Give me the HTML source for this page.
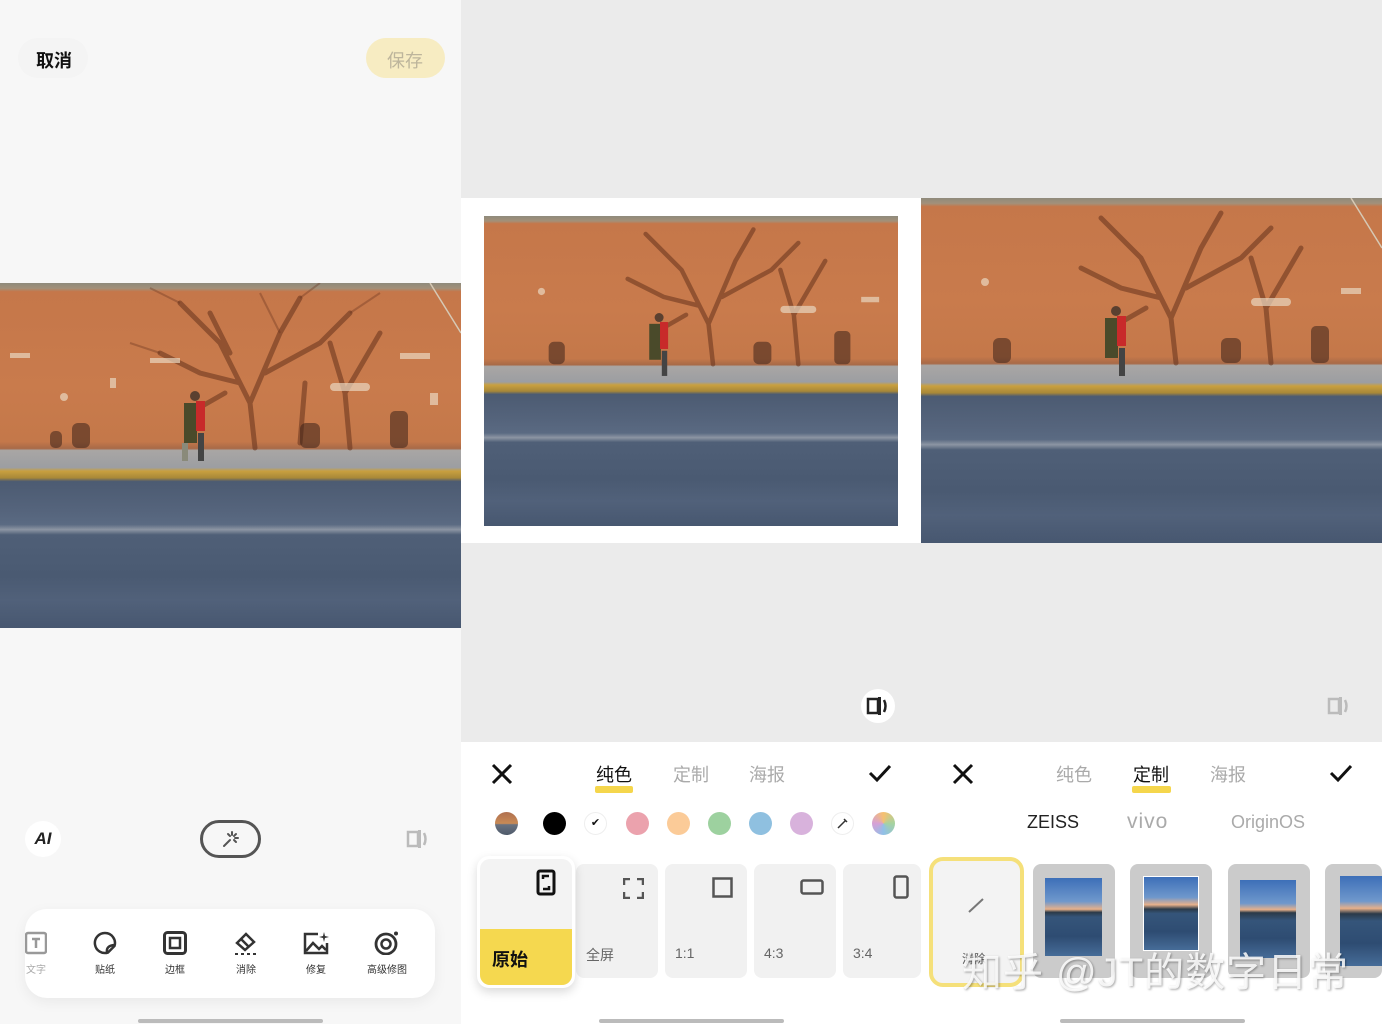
<!DOCTYPE html>
<html><head><meta charset="utf-8">
<style>
*{margin:0;padding:0;box-sizing:border-box}
body{width:1382px;height:1024px;overflow:hidden;position:relative;font-family:"Liberation Sans","Noto Sans CJK SC",sans-serif;background:#f7f7f7}
.abs{position:absolute}
.photo{position:absolute;overflow:hidden;background:linear-gradient(180deg,#8f8a7c 0%,#a39079 1.6%,#c5774a 2.5%,#c97b4c 30%,#c4784a 46%,#a86a48 48%,#a9a6a4 48.5%,#9c9ea2 53.5%,#c9a040 54.5%,#a88838 56.5%,#4c5b72 57.5%,#55647c 66%,#5a6a82 70%,#8c95a3 71.5%,#4f5f77 73%,#4a5a72 85%,#51617a 92%,#475770 100%)}
.photo svg{position:absolute;left:0;top:0;width:100%;height:100%}
.tab{position:absolute;font-size:18px;color:#aaa}
.dot{position:absolute;width:23px;height:23px;border-radius:50%;top:812px}
.card{position:absolute;top:864px;width:82px;height:114px;background:#f1f1f1;border-radius:8px}
.card span{position:absolute;left:10px;top:81px;font-size:14px;color:#666}
.tool{position:absolute;top:931px;width:60px;text-align:center;font-size:10px;color:#333}
.tool svg{display:block;margin:0 auto 6px}
.thumb{position:absolute;top:864px;width:82px;height:114px;background:#cbcbcb;border-radius:8px;overflow:hidden}
</style></head><body>

<!-- LEFT PANEL -->
<div class="abs" style="left:0;top:0;width:461px;height:1024px;background:#f7f7f7"></div>
<div class="abs" style="left:18px;top:38px;width:70px;height:40px;border-radius:20px;background:#f4f4f4"></div>
<div class="abs" style="left:36px;top:47px;font-size:18px;font-weight:bold;color:#111">取消</div>
<div class="abs" style="left:366px;top:38px;width:79px;height:40px;border-radius:20px;background:#f7ecc2"></div>
<div class="abs" style="left:387px;top:47px;font-size:18px;color:#bdb59c">保存</div>

<div class="photo" style="left:0;top:283px;width:461px;height:345px">
<svg viewBox="0 0 461 345" preserveAspectRatio="none">
<g stroke="rgba(100,50,28,.55)" fill="none" stroke-width="5" stroke-linecap="round">
<path d="M255 165 L250 120 L220 60 L180 20 M250 120 L280 50 L300 15 M240 100 L200 90 L160 70 M265 90 L320 60 L350 30 M230 70 L210 30 M225 110 L190 130"/>
<path d="M350 165 L345 110 L330 60 M345 110 L380 50 M300 160 L305 100"/>
</g>
<g stroke="rgba(100,50,28,.35)" fill="none" stroke-width="2"><path d="M180 20 L150 5 M300 15 L320 0 M350 30 L380 10 M160 70 L130 60 M280 50 L260 10"/></g>
<g fill="rgba(60,35,25,.55)"><rect x="72" y="140" width="18" height="25" rx="6"/><rect x="300" y="140" width="20" height="25" rx="6"/><rect x="390" y="128" width="18" height="37" rx="5"/><rect x="50" y="148" width="12" height="17" rx="5"/></g>
<g fill="#e9d7c0" opacity=".7"><rect x="330" y="100" width="40" height="8" rx="4"/><rect x="10" y="70" width="20" height="5"/><rect x="150" y="75" width="30" height="5"/><rect x="400" y="70" width="30" height="6"/><rect x="60" y="110" width="8" height="8" rx="4"/><rect x="110" y="95" width="6" height="10"/><rect x="430" y="110" width="8" height="12"/></g>
<rect x="184" y="120" width="13" height="40" fill="#4a4a2a"/><rect x="196" y="118" width="9" height="30" fill="#c82a2a"/><circle cx="195" cy="113" r="5" fill="#5a4030"/><rect x="182" y="160" width="6" height="18" fill="#8a8a7a"/><rect x="198" y="150" width="6" height="28" fill="#444"/>
<path d="M430 0 L461 50" stroke="#d6c9b5" stroke-width="1.5"/>
</svg>
</div>

<div class="abs" style="left:25px;top:821px;width:36px;height:36px;border-radius:50%;background:#fff;text-align:center;line-height:36px;font-weight:900;font-style:italic;font-size:17px;color:#222">AI</div>
<div class="abs" style="left:200px;top:820px;width:61px;height:38px;border:3px solid #555;border-radius:20px"></div>
<svg class="abs" style="left:220px;top:829px" width="21" height="21" viewBox="0 0 21 21"><g stroke="#555" stroke-width="2" stroke-linecap="round"><path d="M4 17 L10 11"/><path d="M12 3v3M16 5l-2 2M18 9h-3M8 5l2 2M16 13l-2-2"/></g></svg>
<svg class="abs" style="left:406px;top:828px" width="24" height="22" viewBox="0 0 24 22"><rect x="2" y="4" width="10" height="14" fill="none" stroke="#bbb" stroke-width="2.5"/><rect x="12" y="2" width="3" height="18" fill="#bbb"/><path d="M18 5 Q21 11 18 17" fill="none" stroke="#bbb" stroke-width="2.5"/></svg>

<div class="abs" style="left:25px;top:909px;width:410px;height:89px;border-radius:22px;background:#fff;box-shadow:0 4px 14px rgba(0,0,0,.06)"></div>
<div class="tool" style="left:6px;color:#aaa"><svg width="22" height="24" viewBox="0 0 22 24"><rect x="1" y="2" width="20" height="20" rx="2" fill="none" stroke="#999" stroke-width="2.5"/><path d="M7 8h8M11 8v9" stroke="#999" stroke-width="2.5"/></svg>文字</div>
<div class="tool" style="left:75px"><svg width="24" height="24" viewBox="0 0 24 24"><path d="M12 2a10 10 0 1 0 3 19.5 L21.5 15 A10 10 0 0 0 12 2z" fill="none" stroke="#333" stroke-width="2.5"/><path d="M14 21 Q13 15 21 14" fill="none" stroke="#333" stroke-width="2.5"/></svg>贴纸</div>
<div class="tool" style="left:145px"><svg width="24" height="24" viewBox="0 0 24 24"><rect x="1.5" y="1.5" width="21" height="21" rx="3" fill="none" stroke="#333" stroke-width="3"/><rect x="7" y="7" width="10" height="10" fill="none" stroke="#333" stroke-width="2.5"/></svg>边框</div>
<div class="tool" style="left:216px"><svg width="26" height="24" viewBox="0 0 26 24"><path d="M4 12 L13 3 L21 11 L12 19z" fill="none" stroke="#333" stroke-width="2.5"/><path d="M8 8 L16 16" stroke="#333" stroke-width="2.5"/><path d="M2 23h3M8 23h3M14 23h3M20 23h3" stroke="#333" stroke-width="2"/></svg>消除</div>
<div class="tool" style="left:286px"><svg width="26" height="24" viewBox="0 0 26 24"><path d="M15 3H2v19h22V12" fill="none" stroke="#333" stroke-width="2.5"/><path d="M3 20 L10 12 L16 18 L19 15 L23 19" fill="none" stroke="#333" stroke-width="2.5"/><path d="M21 1 L22 5 L26 6 L22 7 L21 11 L20 7 L16 6 L20 5z" fill="#333"/></svg>修复</div>
<div class="tool" style="left:357px;width:60px"><svg width="26" height="24" viewBox="0 0 26 24"><circle cx="12" cy="13" r="10" fill="none" stroke="#333" stroke-width="2.8"/><circle cx="12" cy="13" r="4.5" fill="none" stroke="#333" stroke-width="2.5"/><circle cx="22" cy="2.5" r="2" fill="#333"/></svg>高级修图</div>
<div class="abs" style="left:138px;top:1019px;width:185px;height:4px;border-radius:2px;background:#bbb"></div>

<!-- MIDDLE PANEL -->
<div class="abs" style="left:461px;top:0;width:460px;height:742px;background:#ebebeb"></div>
<div class="abs" style="left:461px;top:198px;width:460px;height:345px;background:#fff"></div>
<div class="photo" style="left:484px;top:216px;width:414px;height:310px">
<svg viewBox="0 0 461 345" preserveAspectRatio="none">
<g stroke="rgba(100,50,28,.55)" fill="none" stroke-width="5" stroke-linecap="round"><path d="M255 165 L250 120 L220 60 L180 20 M250 120 L280 50 L300 15 M240 100 L200 90 L160 70 M265 90 L320 60 L350 30 M225 110 L190 130"/><path d="M350 165 L345 110 L330 60 M345 110 L380 50"/></g>
<g fill="rgba(60,35,25,.55)"><rect x="72" y="140" width="18" height="25" rx="6"/><rect x="300" y="140" width="20" height="25" rx="6"/><rect x="390" y="128" width="18" height="37" rx="5"/></g>
<g fill="#e9d7c0" opacity=".7"><rect x="330" y="100" width="40" height="8" rx="4"/><rect x="60" y="80" width="8" height="8" rx="4"/><rect x="420" y="90" width="20" height="6"/></g>
<rect x="184" y="120" width="13" height="40" fill="#4a4a2a"/><rect x="196" y="118" width="9" height="30" fill="#c82a2a"/><circle cx="195" cy="113" r="5" fill="#5a4030"/><rect x="198" y="150" width="6" height="28" fill="#444"/>
</svg></div>
<div class="abs" style="left:861px;top:689px;width:34px;height:34px;border-radius:50%;background:#fff"></div>
<svg class="abs" style="left:866px;top:695px" width="24" height="22" viewBox="0 0 24 22"><rect x="2" y="4" width="10" height="14" fill="none" stroke="#222" stroke-width="2.5"/><rect x="12" y="2" width="3" height="18" fill="#222"/><path d="M18 5 Q21 11 18 17" fill="none" stroke="#222" stroke-width="2.5"/></svg>

<div class="abs" style="left:461px;top:742px;width:460px;height:282px;background:#fff"></div>
<svg class="abs" style="left:491px;top:763px" width="22" height="22" viewBox="0 0 22 22"><path d="M2 2L20 20M20 2L2 20" stroke="#111" stroke-width="3"/></svg>
<div class="abs" style="left:595px;top:786px;width:38px;height:7px;background:#f5d64c;border-radius:2px"></div>
<div class="tab" style="left:596px;top:761px;color:#111">纯色</div>
<div class="tab" style="left:673px;top:761px">定制</div>
<div class="tab" style="left:749px;top:761px">海报</div>
<svg class="abs" style="left:868px;top:763px" width="24" height="20" viewBox="0 0 24 20"><path d="M2 10 L9 17 L22 3" fill="none" stroke="#111" stroke-width="3"/></svg>

<div class="dot" style="left:495px;background:linear-gradient(180deg,#b07050 0%,#c88a55 50%,#6a7280 55%,#4e5a6a 100%)"></div>
<div class="dot" style="left:543px;background:#000"></div>
<div class="dot" style="left:584px;background:#fff;border:1px solid #eee;text-align:center;line-height:21px;font-size:11px;color:#111">✔</div>
<div class="dot" style="left:626px;background:#eba2ad"></div>
<div class="dot" style="left:667px;background:#fbcb98"></div>
<div class="dot" style="left:708px;background:#9dd19f"></div>
<div class="dot" style="left:749px;background:#8fc0e0"></div>
<div class="dot" style="left:790px;background:#d8b2dc"></div>
<div class="dot" style="left:831px;background:#fff;border:1px solid #eee"></div>
<svg class="abs" style="left:837px;top:818px" width="11" height="11" viewBox="0 0 11 11"><path d="M1 10 L8 3 M7 1 L10 4" stroke="#333" stroke-width="1.5"/></svg>
<div class="dot" style="left:872px;background:conic-gradient(#f6c070,#a5d3a0,#90c0e8,#d6a0d6,#f6c070)"></div>

<div class="card" style="left:576px"><span>全屏</span><svg class="abs" style="left:47px;top:14px" width="21" height="21" viewBox="0 0 21 21"><path d="M1 7V1h6M14 1h6v6M20 14v6h-6M7 20H1v-6" fill="none" stroke="#555" stroke-width="2.5"/></svg></div>
<div class="card" style="left:665px"><span>1:1</span><svg class="abs" style="left:47px;top:13px" width="21" height="21" viewBox="0 0 21 21"><rect x="1.5" y="1.5" width="18" height="18" fill="none" stroke="#555" stroke-width="2.5"/></svg></div>
<div class="card" style="left:754px"><span>4:3</span><svg class="abs" style="left:46px;top:15px" width="24" height="17" viewBox="0 0 24 17"><rect x="1.5" y="1.5" width="21" height="13" rx="2" fill="none" stroke="#555" stroke-width="2.5"/></svg></div>
<div class="card" style="left:843px;width:78px"><span>3:4</span><svg class="abs" style="left:50px;top:11px" width="17" height="24" viewBox="0 0 17 24"><rect x="1.5" y="1.5" width="13" height="21" rx="2" fill="none" stroke="#555" stroke-width="2.5"/></svg></div>
<div class="abs" style="left:477px;top:856px;width:98px;height:132px;background:#fff;border-radius:12px;box-shadow:0 4px 10px rgba(0,0,0,.15)"></div>
<div class="abs" style="left:480px;top:859px;width:92px;height:126px;border-radius:10px;overflow:hidden;background:#f3f3f3">
<div class="abs" style="left:0;top:70px;width:92px;height:56px;background:#f5d84f"></div>
<div class="abs" style="left:12px;top:87px;font-size:18px;font-weight:bold;color:#111">原始</div>
<svg class="abs" style="left:56px;top:10px" width="20" height="27" viewBox="0 0 20 27"><rect x="2" y="2" width="16" height="23" rx="2" fill="none" stroke="#111" stroke-width="3"/><path d="M7 10V7h6M13 17v3H7" fill="none" stroke="#111" stroke-width="2.5"/></svg>
</div>
<div class="abs" style="left:599px;top:1019px;width:185px;height:4px;border-radius:2px;background:#bbb"></div>

<!-- RIGHT PANEL -->
<div class="abs" style="left:921px;top:0;width:461px;height:742px;background:#ebebeb"></div>
<div class="photo" style="left:921px;top:198px;width:461px;height:345px">
<svg viewBox="0 0 461 345" preserveAspectRatio="none">
<g stroke="rgba(100,50,28,.55)" fill="none" stroke-width="5" stroke-linecap="round"><path d="M255 165 L250 120 L220 60 L180 20 M250 120 L280 50 L300 15 M240 100 L200 90 L160 70 M265 90 L320 60 L350 30 M225 110 L190 130"/><path d="M350 165 L345 110 L330 60 M345 110 L380 50"/></g>
<g fill="rgba(60,35,25,.55)"><rect x="72" y="140" width="18" height="25" rx="6"/><rect x="300" y="140" width="20" height="25" rx="6"/><rect x="390" y="128" width="18" height="37" rx="5"/></g>
<g fill="#e9d7c0" opacity=".7"><rect x="330" y="100" width="40" height="8" rx="4"/><rect x="60" y="80" width="8" height="8" rx="4"/><rect x="420" y="90" width="20" height="6"/></g>
<rect x="184" y="120" width="13" height="40" fill="#4a4a2a"/><rect x="196" y="118" width="9" height="30" fill="#c82a2a"/><circle cx="195" cy="113" r="5" fill="#5a4030"/><rect x="198" y="150" width="6" height="28" fill="#444"/>
<path d="M430 0 L461 50" stroke="#d6c9b5" stroke-width="1.5"/>
</svg></div>
<svg class="abs" style="left:1327px;top:695px" width="24" height="22" viewBox="0 0 24 22"><rect x="2" y="4" width="10" height="14" fill="none" stroke="#bbb" stroke-width="2.5"/><rect x="12" y="2" width="3" height="18" fill="#bbb"/><path d="M18 5 Q21 11 18 17" fill="none" stroke="#bbb" stroke-width="2.5"/></svg>

<div class="abs" style="left:921px;top:742px;width:461px;height:282px;background:#fff"></div>
<svg class="abs" style="left:952px;top:763px" width="22" height="22" viewBox="0 0 22 22"><path d="M2 2L20 20M20 2L2 20" stroke="#111" stroke-width="3"/></svg>
<div class="tab" style="left:1056px;top:761px">纯色</div>
<div class="abs" style="left:1132px;top:786px;width:39px;height:7px;background:#f5d64c;border-radius:2px"></div>
<div class="tab" style="left:1133px;top:761px;color:#111">定制</div>
<div class="tab" style="left:1210px;top:761px">海报</div>
<svg class="abs" style="left:1329px;top:763px" width="24" height="20" viewBox="0 0 24 20"><path d="M2 10 L9 17 L22 3" fill="none" stroke="#111" stroke-width="3"/></svg>
<div class="abs" style="left:1027px;top:812px;font-size:18px;color:#222">ZEISS</div>
<div class="abs" style="left:1127px;top:810px;font-size:21px;color:#aaa;letter-spacing:1px">vivo</div>
<div class="abs" style="left:1231px;top:812px;font-size:18px;color:#aaa">OriginOS</div>

<div class="abs" style="left:929px;top:857px;width:95px;height:130px;border:4px solid #f5e07a;border-radius:14px;background:#f3f3f3"></div>
<svg class="abs" style="left:967px;top:895px" width="20" height="20" viewBox="0 0 20 20"><path d="M2 17L16 4" stroke="#777" stroke-width="2"/></svg>
<div class="abs" style="left:962px;top:950px;font-size:12px;color:#555">清除</div>
<div class="thumb" style="left:1033px"></div><div class="abs" style="left:1045px;top:878px;width:57px;height:78px;background:linear-gradient(180deg,#3d6fb8 0%,#6f98cc 30%,#e7b08a 40%,#2b3a48 44%,#35557a 50%,#2e4c72 75%,#466c98 100%)"></div>
<div class="thumb" style="left:1130px"></div><div class="abs" style="left:1143px;top:876px;width:56px;height:75px;border:1px solid #fff;background:linear-gradient(180deg,#3d6fb8 0%,#6f98cc 28%,#e7b08a 38%,#2b3a48 44%,#35557a 50%,#2e4c72 75%,#466c98 100%)"></div>
<div class="thumb" style="left:1228px"></div><div class="abs" style="left:1240px;top:880px;width:56px;height:78px;background:linear-gradient(180deg,#3d6fb8 0%,#6f98cc 30%,#e7b08a 38%,#2b3a48 42%,#35557a 52%,#2e4c72 75%,#466c98 100%)"></div>
<div class="thumb" style="left:1325px;width:57px"></div><div class="abs" style="left:1340px;top:876px;width:42px;height:90px;background:linear-gradient(180deg,#3d6fb8 0%,#6f98cc 28%,#e7b08a 36%,#2b3a48 42%,#35557a 50%,#2e4c72 75%,#466c98 100%)"></div>

<div class="abs" style="left:962px;top:940px;font-size:40px;color:rgba(255,255,255,.85);text-shadow:1px 1px 2px rgba(0,0,0,.35);letter-spacing:1px;white-space:nowrap">知乎 @JT的数字日常</div>
<div class="abs" style="left:1060px;top:1019px;width:185px;height:4px;border-radius:2px;background:#bbb"></div>
</body></html>
